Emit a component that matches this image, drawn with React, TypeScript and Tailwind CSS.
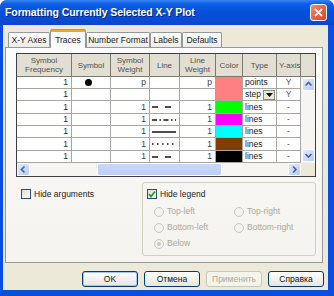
import React from 'react';

type LineKind = 'none' | 'dash' | 'dashdot' | 'solid' | 'dot';

type Row = {
  dot?: boolean;
  sw: string;
  lw: string;
  line: LineKind;
  color: string;
  type: string;
  y: string;
  drop?: boolean;
  h: string;
};

const rows: Row[] = [
  { dot: true, sw: 'p', lw: 'p', line: 'none', color: 'bg-[#ff8080] border-b-[#ff8080]', type: 'points', y: 'Y', h: 'h-[12px]' },
  { sw: '', lw: '', line: 'none', color: 'bg-[#ff8080]', type: 'step', y: 'Y', drop: true, h: 'h-[12px]' },
  { sw: '1', lw: '1', line: 'dash', color: 'bg-[#00ff00]', type: 'lines', y: '-', h: 'h-[13px]' },
  { sw: '1', lw: '1', line: 'dashdot', color: 'bg-[#ff00ff]', type: 'lines', y: '-', h: 'h-[12px]' },
  { sw: '1', lw: '1', line: 'solid', color: 'bg-[#00ffff]', type: 'lines', y: '-', h: 'h-[12px]' },
  { sw: '1', lw: '1', line: 'dot', color: 'bg-[#7f3f00]', type: 'lines', y: '-', h: 'h-[13px]' },
  { sw: '1', lw: '1', line: 'dash', color: 'bg-[#000000]', type: 'lines', y: '-', h: 'h-[12px]' },
];

const LineStyle = ({ kind }: { kind: LineKind }) => {
  if (kind === 'none') return null;
  const dash =
    kind === 'dash' ? '6 7' : kind === 'dashdot' ? '5 2.5 1.5 2.5' : kind === 'dot' ? '1.5 3.5' : undefined;
  const x2 = kind === 'dash' ? 21 : 26;
  return (
    <svg width="29" height="10" className="block">
      <line x1="2" x2={x2} y1="5" y2="5" stroke="#151515" strokeWidth="1.3" strokeDasharray={dash} />
    </svg>
  );
};

const Chevron = ({ dir }: { dir: 'up' | 'down' | 'left' | 'right' }) => {
  const pts = {
    up: '2.5,6.5 5.5,3.5 8.5,6.5',
    down: '2.5,4 5.5,7 8.5,4',
    left: '6.5,2.5 3.5,5.5 6.5,8.5',
    right: '4,2.5 7,5.5 4,8.5',
  }[dir];
  return (
    <svg width="11" height="11" className="block">
      <polyline points={pts} fill="none" stroke="#4d6185" strokeWidth="1.6" />
    </svg>
  );
};

const ScrollBtn = ({ dir }: { dir: 'up' | 'down' | 'left' | 'right' }) => (
  <div className="w-[13px] h-[13px] flex items-center justify-center rounded-[2px] border border-white bg-[linear-gradient(135deg,#e1eafe,#b6cbf8)]">
    <Chevron dir={dir} />
  </div>
);

const Head = ({ w, children, left }: { w: string; children: React.ReactNode; left?: boolean }) => (
  <div
    className={`${w} h-full shrink-0 border-r border-[#7a7a72] flex items-center overflow-hidden whitespace-nowrap text-[8px] leading-[9px] text-[#505050] ${
      left ? 'justify-start pl-[2px]' : 'justify-center text-center'
    }`}
  >
    {children}
  </div>
);

const Cell = ({ w, className = '', children }: { w: string; className?: string; children?: React.ReactNode }) => (
  <div className={`${w} h-full shrink-0 border-r border-b border-[#a7a6a0] flex items-center overflow-hidden ${className}`}>
    {children}
  </div>
);

const Table = () => (
  <div className="w-[300px] border border-[#3f3f3f] bg-white">
    <div className="flex">
      <div className="w-[284px]">
        <div className="flex h-[23px] bg-[#e2dfd2] border-b border-[#7a7a72]">
          <Head w="w-[55px]">Symbol<br />Frequency</Head>
          <Head w="w-[39px]">Symbol</Head>
          <Head w="w-[39px]">Symbol<br />Weight</Head>
          <Head w="w-[30px]">Line</Head>
          <Head w="w-[36px]">Line<br />Weight</Head>
          <Head w="w-[27px]">Color</Head>
          <Head w="w-[34px]">Type</Head>
          <Head w="w-[24px]" left>Y-axis</Head>
        </div>
        {rows.map((r, i) => (
          <div key={i} className={`flex ${r.h} text-[8.5px] leading-none text-[#2b2438]`}>
            <Cell w="w-[55px]" className="justify-end pr-[3px]">1</Cell>
            <Cell w="w-[39px]" className="justify-center">
              {r.dot && <div className="w-[7px] h-[7px] rounded-full bg-black ml-[-6px]" />}
            </Cell>
            <Cell w="w-[39px]" className="justify-end pr-[3px] text-[#3a3a3a]">{r.sw}</Cell>
            <Cell w="w-[30px]">
              <LineStyle kind={r.line} />
            </Cell>
            <Cell w="w-[36px]" className="justify-end pr-[3px] text-[#3a3a3a]">{r.sw === 'p' ? 'p' : r.lw}</Cell>
            <Cell w="w-[27px]" className={r.color}></Cell>
            <Cell w="w-[34px]" className="justify-between pl-[2px] text-[#222]">
              <span>{r.type}</span>
              {r.drop && (
                <div className="w-[12px] h-[10px] mr-[1px] border border-[#8a8a8a] bg-[#ece9d8] flex items-center justify-center">
                  <svg width="7" height="4" className="block">
                    <polygon points="0,0 7,0 3.5,4" fill="#000" />
                  </svg>
                </div>
              )}
            </Cell>
            <Cell w="w-[24px]" className="justify-center text-[#555]">{r.y}</Cell>
          </div>
        ))}
      </div>
      <div className="w-[14px] flex flex-col">
        <div className="h-[23px] bg-[#e2dfd2] border-b border-[#7a7a72]" />
        <div className="h-[86px] bg-[#f6f5f1] flex flex-col justify-between items-center py-[1px]">
          <ScrollBtn dir="up" />
          <ScrollBtn dir="down" />
        </div>
      </div>
    </div>
    <div className="flex h-[13px]">
      <div className="w-[284px] flex bg-[#f6f5f1]">
        <ScrollBtn dir="left" />
        <div className="w-[67px]" />
        <div className="w-[125px] h-full rounded-[2px] border border-[#ffffff] bg-[linear-gradient(180deg,#cad8fb,#bccefa)]" />
        <div className="w-[66px]" />
        <ScrollBtn dir="right" />
      </div>
      <div className="w-[14px] bg-[#ece9d8]" />
    </div>
  </div>
);

const CheckBox = ({ checked }: { checked?: boolean }) => (
  <div className="w-[10px] h-[10px] border border-[#1c5180] bg-[linear-gradient(135deg,#dcdcd7,#ffffff)] flex items-center justify-center shrink-0">
    {checked && (
      <svg width="8" height="8" className="block">
        <polyline points="1,4 3,6.5 7,1.5" fill="none" stroke="#21a121" strokeWidth="1.8" />
      </svg>
    )}
  </div>
);

const Radio = ({ label, selected }: { label: string; selected?: boolean }) => (
  <div className="flex items-center gap-[3px] h-[16px]">
    <div className="w-[10px] h-[10px] rounded-full border border-[#cac8bb] bg-[#f4f3ee] flex items-center justify-center">
      {selected && <div className="w-[4px] h-[4px] rounded-full bg-[#cac8bb]" />}
    </div>
    <span className="text-[8.5px] text-[#aca899]">{label}</span>
  </div>
);

const Tab = ({ label, w, active }: { label: string; w: string; active?: boolean }) =>
  active ? (
    <div className={`${w} h-[19px] -mb-[1px] z-10 relative rounded-t-[3px] border border-b-0 border-[#919b9c] bg-[#fcfcfe] flex flex-col`}>
      <div className="h-[3px] -mx-[1px] -mt-[1px] rounded-t-[3px] bg-[#f1a33a] border-t border-[#e68b2c]" />
      <div className="flex-1 flex items-center justify-center text-[8.5px] text-[#222]">{label}</div>
    </div>
  ) : (
    <div
      className={`${w} h-[15px] rounded-t-[2px] border border-b-0 border-[#919b9c] bg-[linear-gradient(180deg,#ffffff,#ecebe5)] flex items-center justify-center text-[8.5px] text-[#222]`}
    >
      {label}
    </div>
  );

const Button = ({ label, primary, disabled }: { label: string; primary?: boolean; disabled?: boolean }) => (
  <div
    className={`w-[56px] h-[16px] rounded-[3px] border flex items-center justify-center text-[8.5px] ${
      disabled
        ? 'border-[#c9c7ba] bg-[#f5f4ea] text-[#aca899]'
        : 'border-[#003c74] bg-[linear-gradient(180deg,#ffffff,#e6e5df)] text-[#111]'
    } ${primary ? 'shadow-[inset_0_0_0_1px_#a9c4f5]' : ''}`}
  >
    {label}
  </div>
);

export default function App() {
  return (
    <div className="w-[334px] h-[296px] bg-white font-['Liberation_Sans',Arial,sans-serif]">
      <div className="w-[334px] h-[296px] rounded-t-[7px] bg-[#0a4ee0] flex flex-col overflow-hidden">
        <div className="h-[25px] shrink-0 flex items-center justify-between pl-[5px] pr-[7px] bg-[linear-gradient(180deg,#3b86f5_0%,#0f5fe6_15%,#0550dc_45%,#0a4bd4_80%,#0a45c8_100%)]">
          <span className="text-white font-bold text-[10.5px] tracking-[-0.1px] [text-shadow:1px_1px_0_#0a1e6e]">
            Formatting Currently Selected X-Y Plot
          </span>
          <div className="w-[17px] h-[17px] rounded-[3px] border border-white bg-[linear-gradient(135deg,#f08b6c,#d6451d)] flex items-center justify-center">
            <svg width="9" height="9" className="block">
              <path d="M1.5 1.5 L7.5 7.5 M7.5 1.5 L1.5 7.5" stroke="#fff" strokeWidth="1.8" strokeLinecap="round" />
            </svg>
          </div>
        </div>
        <div className="ml-[3px] w-[325px] h-[265px] bg-[#ece9d8] flex flex-col">
          <div className="flex items-end h-[22px] pl-[5px] pt-[4px]">
            <Tab label="X-Y Axes" w="w-[42px]" />
            <Tab label="Traces" w="w-[36px]" active />
            <Tab label="Number Format" w="w-[64px]" />
            <Tab label="Labels" w="w-[32px]" />
            <Tab label="Defaults" w="w-[40px]" />
          </div>
          <div className="ml-[2px] w-[318px] h-[216px] border border-[#919b9c] bg-[linear-gradient(180deg,#fcfcfe,#f4f3ee)] pl-[10px] pt-[5px]">
            <Table />
            <div className="flex mt-[5px]">
              <div className="w-[126px] pl-[5px] pt-[6px]">
                <div className="flex items-center gap-[3px]">
                  <CheckBox />
                  <span className="text-[8.5px] text-[#222]">Hide arguments</span>
                </div>
              </div>
              <div className="w-[174px] h-[74px] rounded-[3px] border border-[#d0d0bf] pl-[4px] pt-[5px]">
                <div className="flex items-center gap-[3px]">
                  <CheckBox checked />
                  <span className="text-[8.5px] text-[#222]">Hide legend</span>
                </div>
                <div className="grid grid-cols-[80px_80px] pl-[7px] mt-[3px]">
                  <Radio label="Top-left" />
                  <Radio label="Top-right" />
                  <Radio label="Bottom-left" />
                  <Radio label="Bottom-right" />
                  <Radio label="Below" selected />
                </div>
              </div>
            </div>
          </div>
          <div className="flex justify-end gap-[6px] pr-[4px] pt-[8px]">
            <Button label="OK" primary />
            <Button label="Отмена" />
            <Button label="Применить" disabled />
            <Button label="Справка" />
          </div>
        </div>
      </div>
    </div>
  );
}
